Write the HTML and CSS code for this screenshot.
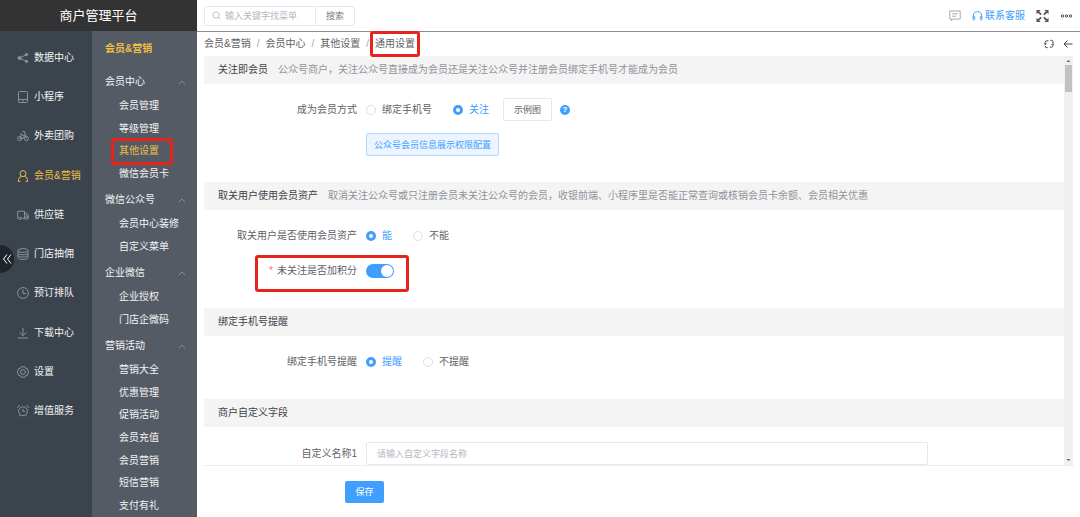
FILE: index.html
```html
<!DOCTYPE html>
<html lang="zh-CN">
<head>
<meta charset="utf-8">
<title>商户管理平台</title>
<link rel="stylesheet" href="styles.css">
</head>
<body>
<div class="app">
  <aside class="sidebar">
    <h1 class="brand">商户管理平台</h1>
    <div class="menus">
      <nav class="primary" aria-label="主菜单">
        <ul class="primary-list">
          <li><a href="#"><svg class="icon" viewBox="0 0 12 12"><g fill="currentColor"><circle cx="2.6" cy="6" r="1.6"/><circle cx="9.5" cy="2.6" r="1.200"/><circle cx="9.5" cy="9.4" r="1.200"/></g><path d="M9.5 2.6L2.6 6l6.9 3.4"/></svg>数据中心</a></li>
          <li><a href="#"><svg class="icon" viewBox="0 0 12 12"><rect x="1.5" y=".5" width="9" height="11" rx="1"/><path d="M1.500 8.500h9M5.2 10h1.6"/></svg>小程序</a></li>
          <li><a href="#"><svg class="icon" viewBox="0 0 12 12"><circle cx="2.6" cy="8.5" r="2.100"/><circle cx="9.4" cy="8.5" r="2.100"/><path d="M2.6 8.5l1.9-3.200h3.300L6 8.500H2.6M5.600 1.500h1.900l1.900 7M2.800 4h2.400"/></svg>外卖团购</a></li>
          <li><a href="#" class="active"><svg class="icon" viewBox="0 0 12 12"><circle cx="6" cy="3.600" r="3"/><path d="M4.300 6.300C2.300 7 1.300 8.700 1.300 11.300h2.200M7.700 6.300c2 .7 3 2.400 3 5H8.500"/></svg>会员&amp;营销</a></li>
          <li><a href="#"><svg class="icon" viewBox="0 0 12 12"><path d="M2 9.300H.7V2.200h6.800v7.100H4.500M7.500 4.200h2.400l1.500 2.200v2.900h-.8M7.500 9.300h.6M9.400 5.800v1.500h1.800"/><circle cx="3.200" cy="9.400" r="1.200"/><circle cx="9.300" cy="9.400" r="1.200"/></svg>供应链</a></li>
          <li><a href="#"><svg class="icon" viewBox="0 0 12 12"><ellipse cx="6" cy="2.500" rx="5" ry="1.900"/><path d="M1 2.500v7c0 1.100 2.200 1.900 5 1.900s5-.8 5-1.900v-7M1 4.900c0 1.100 2.200 1.900 5 1.900s5-.8 5-1.900M1 7.200c0 1.100 2.200 1.900 5 1.900s5-.8 5-1.900"/></svg>门店抽佣</a></li>
          <li><a href="#"><svg class="icon" viewBox="0 0 12 12"><circle cx="6" cy="6" r="5.400"/><path d="M6 2.500V6.500h3"/></svg>预订排队</a></li>
          <li><a href="#"><svg class="icon" viewBox="0 0 12 12"><path d="M6 1v7.600M2.600 5.300L6 8.700l3.400-3.400M.8 11h10.400"/></svg>下载中心</a></li>
          <li><a href="#"><svg class="icon" viewBox="0 0 12 12"><path d="M4.300.8h3.400l.8 1.500h1.700L11.600 6l-1.400 3.700H8.500l-.8 1.500H4.300l-.8-1.500H1.800L.4 6l1.400-3.700h1.700z"/><circle cx="6" cy="6" r="2.400"/></svg>设置</a></li>
          <li><a href="#"><svg class="icon" viewBox="0 0 12 12"><circle cx="6" cy="6.200" r="4.400"/><path d="M6 3.800v2.700h2M.5 3C.7 1.600 1.600.7 3 .5M11.500 3C11.300 1.600 10.400.7 9 .5M3.200 9.800l-1 1.600M8.800 9.800l1 1.600"/></svg>增值服务</a></li>
        </ul>
        <button class="collapse" type="button" aria-label="收起菜单"><svg viewBox="0 0 10 12"><path d="M5 1.500L1.500 6 5 10.500M9 1.500L5.500 6 9 10.500"/></svg></button>
      </nav>
      <nav class="secondary" aria-label="会员&amp;营销">
        <h2 class="secondary-title">会员&amp;营销</h2>
        <section>
          <button class="group" type="button">会员中心<svg class="chevron" viewBox="0 0 8 5"><path d="M1 4l3-3 3 3"/></svg></button>
          <ul class="sub four">
            <li><a href="#">会员管理</a></li>
            <li><a href="#">等级管理</a></li>
            <li><a href="#" class="active marked">其他设置</a></li>
            <li><a href="#">微信会员卡</a></li>
          </ul>
        </section>
        <section>
          <button class="group" type="button">微信公众号<svg class="chevron" viewBox="0 0 8 5"><path d="M1 4l3-3 3 3"/></svg></button>
          <ul class="sub">
            <li><a href="#">会员中心装修</a></li>
            <li><a href="#">自定义菜单</a></li>
          </ul>
        </section>
        <section>
          <button class="group" type="button">企业微信<svg class="chevron" viewBox="0 0 8 5"><path d="M1 4l3-3 3 3"/></svg></button>
          <ul class="sub">
            <li><a href="#">企业授权</a></li>
            <li><a href="#">门店企微码</a></li>
          </ul>
        </section>
        <section>
          <button class="group" type="button">营销活动<svg class="chevron" viewBox="0 0 8 5"><path d="M1 4l3-3 3 3"/></svg></button>
          <ul class="sub seven">
            <li><a href="#">营销大全</a></li>
            <li><a href="#">优惠管理</a></li>
            <li><a href="#">促销活动</a></li>
            <li><a href="#">会员充值</a></li>
            <li><a href="#">会员营销</a></li>
            <li><a href="#">短信营销</a></li>
            <li><a href="#">支付有礼</a></li>
          </ul>
        </section>
      </nav>
    </div>
  </aside>

  <main class="main">
    <header class="topbar">
      <form class="search">
        <label class="search-box"><svg class="search-icon" viewBox="0 0 10 10"><circle cx="4.500" cy="4.500" r="3.500"/><path d="M7 7l2 2"/></svg><input type="text" placeholder="输入关键字找菜单" aria-label="输入关键字找菜单"></label>
        <button type="button">搜索</button>
      </form>
      <div class="tools">
        <button class="tool" type="button" aria-label="消息"><svg class="message" viewBox="0 0 12 12"><path d="M.8 1h10.400v8H4L2.500 10.800V9H.8zM3.200 3.800h5.600M3.200 6.200h4"/></svg></button>
        <a class="service" href="#"><svg viewBox="0 0 12 12"><path d="M1.500 8V5.800a4.500 4.500 0 0 1 9 0V8"/><rect x="1" y="6.300" width="2" height="4" rx="1"/><rect x="9" y="6.300" width="2" height="4" rx="1"/></svg>联系客服</a>
        <button class="tool" type="button" aria-label="全屏"><svg class="expand" viewBox="0 0 14 14"><path d="M2 2l3.500 3.500M12 2L8.500 5.500M2 12l3.500-3.500M12 12L8.500 8.500"/><path class="solid" d="M.5.5h4.500L.5 5zM13.500.5H9L13.500 5zM.5 13.500h4.500L.5 9zM13.500 13.500H9L13.500 9z"/></svg></button>
        <button class="tool" type="button" aria-label="更多"><svg class="more" viewBox="0 0 12 4"><circle cx="2" cy="2" r="1.200"/><circle cx="6" cy="2" r="1.200"/><circle cx="10" cy="2" r="1.200"/></svg></button>
      </div>
    </header>

    <div class="pathbar">
      <nav class="crumbs" aria-label="当前位置">
        <a href="#">会员&amp;营销</a><span>/</span><a href="#">会员中心</a><span>/</span><a href="#">其他设置</a><span>/</span><a href="#" class="marked">通用设置</a>
      </nav>
      <div class="path-tools">
        <button class="tool" type="button" aria-label="刷新"><svg class="refresh" viewBox="0 0 10 10"><path d="M1.200 5.500V3.500a1.700 1.700 0 0 1 1.700-1.700h1.600M6.300 1.300h1a1.700 1.700 0 0 1 1.700 1.700v1M8.900 5v1.500a1.700 1.700 0 0 1-1.700 1.700H5.700M3.700 8.700h-.8A1.700 1.700 0 0 1 1.200 7M0 4.300l1.200 1.400L2.500 4.400M10 5.700L8.900 4.400 7.600 5.700"/></svg></button>
        <button class="tool" type="button" aria-label="返回"><svg class="back" viewBox="0 0 10 10"><path d="M9.500 5H1M4.500 1.500L1 5l3.500 3.500"/></svg></button>
      </div>
    </div>

    <div class="panel">
      <form class="settings">
        <section class="block">
          <h3>关注即会员<small>公众号商户，关注公众号直接成为会员还是关注公众号并注册会员绑定手机号才能成为会员</small></h3>
          <div class="row">
            <span class="label">成为会员方式</span>
            <div class="field">
              <label class="radio"><input type="radio" name="join">绑定手机号</label>
              <label class="radio"><input type="radio" name="join" checked>关注</label>
              <span class="extra"><button class="plain" type="button">示例图</button><button class="help" type="button" aria-label="帮助">?</button></span>
            </div>
          </div>
          <div class="row">
            <div class="field alone"><button class="soft" type="button">公众号会员信息展示权限配置</button></div>
          </div>
        </section>

        <section class="block">
          <h3>取关用户使用会员资产<small>取消关注公众号或只注册会员未关注公众号的会员，收银前端、小程序里是否能正常查询或核销会员卡余额、会员相关优惠</small></h3>
          <div class="row">
            <span class="label">取关用户是否使用会员资产</span>
            <div class="field">
              <label class="radio"><input type="radio" name="asset" checked>能</label>
              <label class="radio"><input type="radio" name="asset">不能</label>
            </div>
          </div>
          <div class="row">
            <label class="label" for="points"><i>*</i>未关注是否加积分</label>
            <div class="field"><input class="switch" id="points" type="checkbox" role="switch" checked></div>
            <span class="mark-wide"></span>
          </div>
        </section>

        <section class="block">
          <h3>绑定手机号提醒</h3>
          <div class="row">
            <span class="label">绑定手机号提醒</span>
            <div class="field">
              <label class="radio"><input type="radio" name="remind" checked>提醒</label>
              <label class="radio"><input type="radio" name="remind">不提醒</label>
            </div>
          </div>
        </section>

        <section class="block">
          <h3>商户自定义字段</h3>
          <div class="row">
            <label class="label" for="custom1">自定义名称1</label>
            <div class="field"><input class="text" id="custom1" type="text" placeholder="请输入自定义字段名称"></div>
          </div>
        </section>
      </form>
      <div class="scrollbar" aria-hidden="true">
        <svg viewBox="0 0 9 9"><path d="M2.500 6l2-2 2 2z"/></svg>
        <span class="thumb"></span>
        <svg class="down" viewBox="0 0 9 9"><path d="M2.500 3l2 2 2-2z"/></svg>
      </div>
    </div>

    <footer class="actions"><button class="save" type="button">保存</button></footer>
  </main>
</div>
</body>
</html>
```
FILE: styles.css
```css
* {
  box-sizing: border-box;
}

body {
  margin: 0;
  background: #fff;
  color: #606266;
  font: 10px/16px "Liberation Sans", "Noto Sans CJK SC", sans-serif;
}

h1, h2, h3, ul {
  margin: 0;
  padding: 0;
  font-weight: 400;
}

ul {
  list-style: none;
}

a {
  color: inherit;
  text-decoration: none;
}

button, input {
  margin: 0;
  font: inherit;
  color: inherit;
}

button {
  padding: 0;
  border: 0;
  background: none;
  cursor: pointer;
}

svg {
  display: block;
  fill: none;
  stroke: currentColor;
}

.app {
  display: flex;
  height: 100vh;
  overflow: hidden;
}

/* Sidebar */
.sidebar {
  display: flex;
  flex-direction: column;
  flex: none;
  width: 197px;
  color: #f2f3f5;
}

.brand {
  flex: none;
  background: #333;
  color: #fff;
  font-size: 13px;
  line-height: 31px;
  text-align: center;
}

.menus {
  display: flex;
  flex: 1;
  min-height: 0;
}

.primary {
  position: relative;
  width: 92px;
  padding-top: 7px;
  background: #3b444d;
}

.primary-list {
  display: grid;
  min-height: 393px;
}

.primary-list a {
  display: flex;
  align-items: center;
  gap: 5px;
  height: 100%;
  padding-left: 17px;
  white-space: nowrap;
}

.icon {
  flex: none;
  width: 12px;
  height: 12px;
  color: #8b9299;
}

.active,
.active .icon {
  color: #f0bd47;
}

.collapse {
  position: absolute;
  top: 214px;
  left: 0;
  display: flex;
  align-items: center;
  justify-content: center;
  width: 14px;
  height: 28px;
  border-radius: 0 14px 14px 0;
  background: #20252c;
  color: #fff;
}

.collapse svg {
  width: 10px;
  height: 12px;
}

.secondary {
  flex: 1;
  padding-top: 10px;
  background: #555b65;
  overflow: hidden;
}

.secondary-title {
  padding-left: 13px;
  margin-bottom: 10px;
  color: #f0bd47;
  font-size: 10px;
  font-weight: 700;
}

.group {
  display: flex;
  align-items: center;
  justify-content: space-between;
  width: 100%;
  height: 28px;
  padding: 2px 11px 0 13px;
}

.chevron {
  width: 8px;
  height: 5px;
  color: #858b94;
}

.sub {
  display: grid;
  min-height: 45px;
}

.sub.four {
  min-height: 90px;
}

.sub.seven {
  min-height: 158px;
}

.sub a {
  display: flex;
  align-items: center;
  height: 100%;
  padding-left: 27px;
}

.marked {
  position: relative;
}

.marked::after,
.mark-wide {
  position: absolute;
  border: 3px solid #e8231b;
  border-radius: 3px;
  pointer-events: none;
}

.marked::after {
  content: "";
  inset: -5px;
}

.sub .marked::after {
  inset: -2px 24px -2px 19px;
}

/* Top bar */
.main {
  display: flex;
  flex: 1;
  flex-direction: column;
  min-width: 0;
}

.topbar {
  display: flex;
  align-items: center;
  justify-content: space-between;
  flex: none;
  height: 32px;
  padding: 0 7px;
  border-bottom: 1px solid #8c8e92;
}

.search {
  display: flex;
  height: 20px;
  border: 1px solid #e6e8ed;
  border-radius: 3px;
  font-size: 9px;
  color: #777a80;
}

.search-box {
  display: flex;
  align-items: center;
  gap: 4px;
  width: 111px;
  padding-left: 7px;
  border-right: 1px solid #e6e8ed;
}

.search-icon {
  flex: none;
  width: 9px;
  height: 9px;
  color: #b4b8bf;
}

.search input {
  width: 100%;
  min-width: 0;
  padding: 0;
  border: 0;
  outline: 0;
  background: none;
}

.search button {
  width: 38px;
}

::placeholder {
  color: #b4b8bf;
  opacity: 1;
}

.tools {
  display: flex;
  align-items: center;
  gap: 11px;
}

.message {
  width: 12px;
  height: 12px;
  color: #a6a8ab;
}

.service {
  display: flex;
  align-items: center;
  gap: 2px;
  color: #409eff;
}

.service svg {
  width: 11px;
  height: 12px;
}

.expand {
  width: 13px;
  height: 14px;
  color: #555;
  stroke-width: 2;
}

.expand .solid {
  fill: currentColor;
  stroke: none;
}

.more {
  width: 13px;
  height: 4px;
  color: #444;
}

.pathbar {
  display: flex;
  align-items: center;
  justify-content: space-between;
  flex: none;
  height: 24px;
  padding: 0 7px;
}

.crumbs {
  display: flex;
  gap: 6px;
}

.crumbs span {
  color: #a0a4ab;
}

.path-tools {
  display: flex;
  gap: 9px;
  color: #444;
}

.refresh,
.back {
  width: 10px;
  height: 10px;
}

/* Settings */
.panel {
  display: flex;
  flex: 1;
  min-height: 0;
  margin: 0 7px;
  border-bottom: 1px solid #ebeef2;
}

.settings {
  flex: 1;
  min-width: 0;
  overflow: hidden;
}

.block {
  padding-bottom: 26px;
}

.block h3 {
  margin-bottom: 14px;
  padding: 0 14px;
  background: #f4f4f5;
  color: #404246;
  font-size: 10px;
  line-height: 28px;
  white-space: nowrap;
}

.block:last-child h3 {
  margin-bottom: 15px;
}

.block small {
  margin-left: 10px;
  color: #909399;
  font-size: 10px;
}

.row {
  position: relative;
  display: grid;
  grid-template-columns: 153px 1fr;
  align-items: center;
  column-gap: 9px;
  min-height: 23px;
  padding-right: 136px;
}

.row + .row {
  margin-top: 12px;
}

.label {
  text-align: right;
  white-space: nowrap;
}

.label i {
  margin-right: 4px;
  color: #f56c6c;
  font-style: normal;
}

.field {
  display: flex;
  align-items: center;
  gap: 21px;
}

.field.alone {
  grid-column: 2;
}

.radio {
  display: flex;
  align-items: center;
  gap: 6px;
}

.radio input {
  appearance: none;
  width: 10px;
  height: 10px;
  border: 1px solid #dcdfe6;
  border-radius: 50%;
  background: #fff;
}

.radio input:checked {
  border: 3px solid #409eff;
}

.radio:has(:checked) {
  color: #409eff;
}

.extra {
  display: flex;
  align-items: center;
  gap: 8px;
  margin-left: -7px;
}

.plain,
.soft {
  height: 23px;
  padding: 0 10px;
  border: 1px solid #e4e7ed;
  border-radius: 2px;
  font-size: 9px;
}

.soft {
  padding: 0 7px;
  border-color: #b3d8ff;
  background: #ecf5ff;
  color: #409eff;
}

.help {
  width: 10px;
  height: 10px;
  border-radius: 50%;
  background: #409eff;
  color: #fff;
  font-size: 8px;
  font-weight: 700;
  line-height: 10px;
}

.switch {
  appearance: none;
  display: flex;
  justify-content: flex-end;
  width: 28px;
  height: 14px;
  padding: 1px;
  border-radius: 7px;
  background: #409eff;
}

.switch::before {
  content: "";
  width: 12px;
  height: 12px;
  border-radius: 50%;
  background: #fff;
}

.switch:not(:checked) {
  justify-content: flex-start;
  background: #dcdfe6;
}

.mark-wide {
  top: -4px;
  left: 51px;
  width: 154px;
  height: 37px;
}

.text {
  width: 100%;
  height: 23px;
  padding: 0 10px;
  border: 1px solid #e6e8ed;
  border-radius: 2px;
  font-size: 9px;
}

.scrollbar {
  display: flex;
  flex: none;
  flex-direction: column;
  width: 9px;
  background: #f0f0f0;
  color: #666;
}

.scrollbar svg {
  width: 9px;
  height: 9px;
  fill: currentColor;
  stroke: none;
}

.scrollbar .down {
  margin-top: auto;
}

.thumb {
  height: 27px;
  margin: 0 1px;
  background: #c1c1c1;
}

.actions {
  flex: none;
  padding: 15px 148px 14px;
}

.save {
  display: block;
  width: 39px;
  height: 22px;
  border-radius: 2px;
  background: #409eff;
  color: #fff;
  font-size: 9px;
}
```
